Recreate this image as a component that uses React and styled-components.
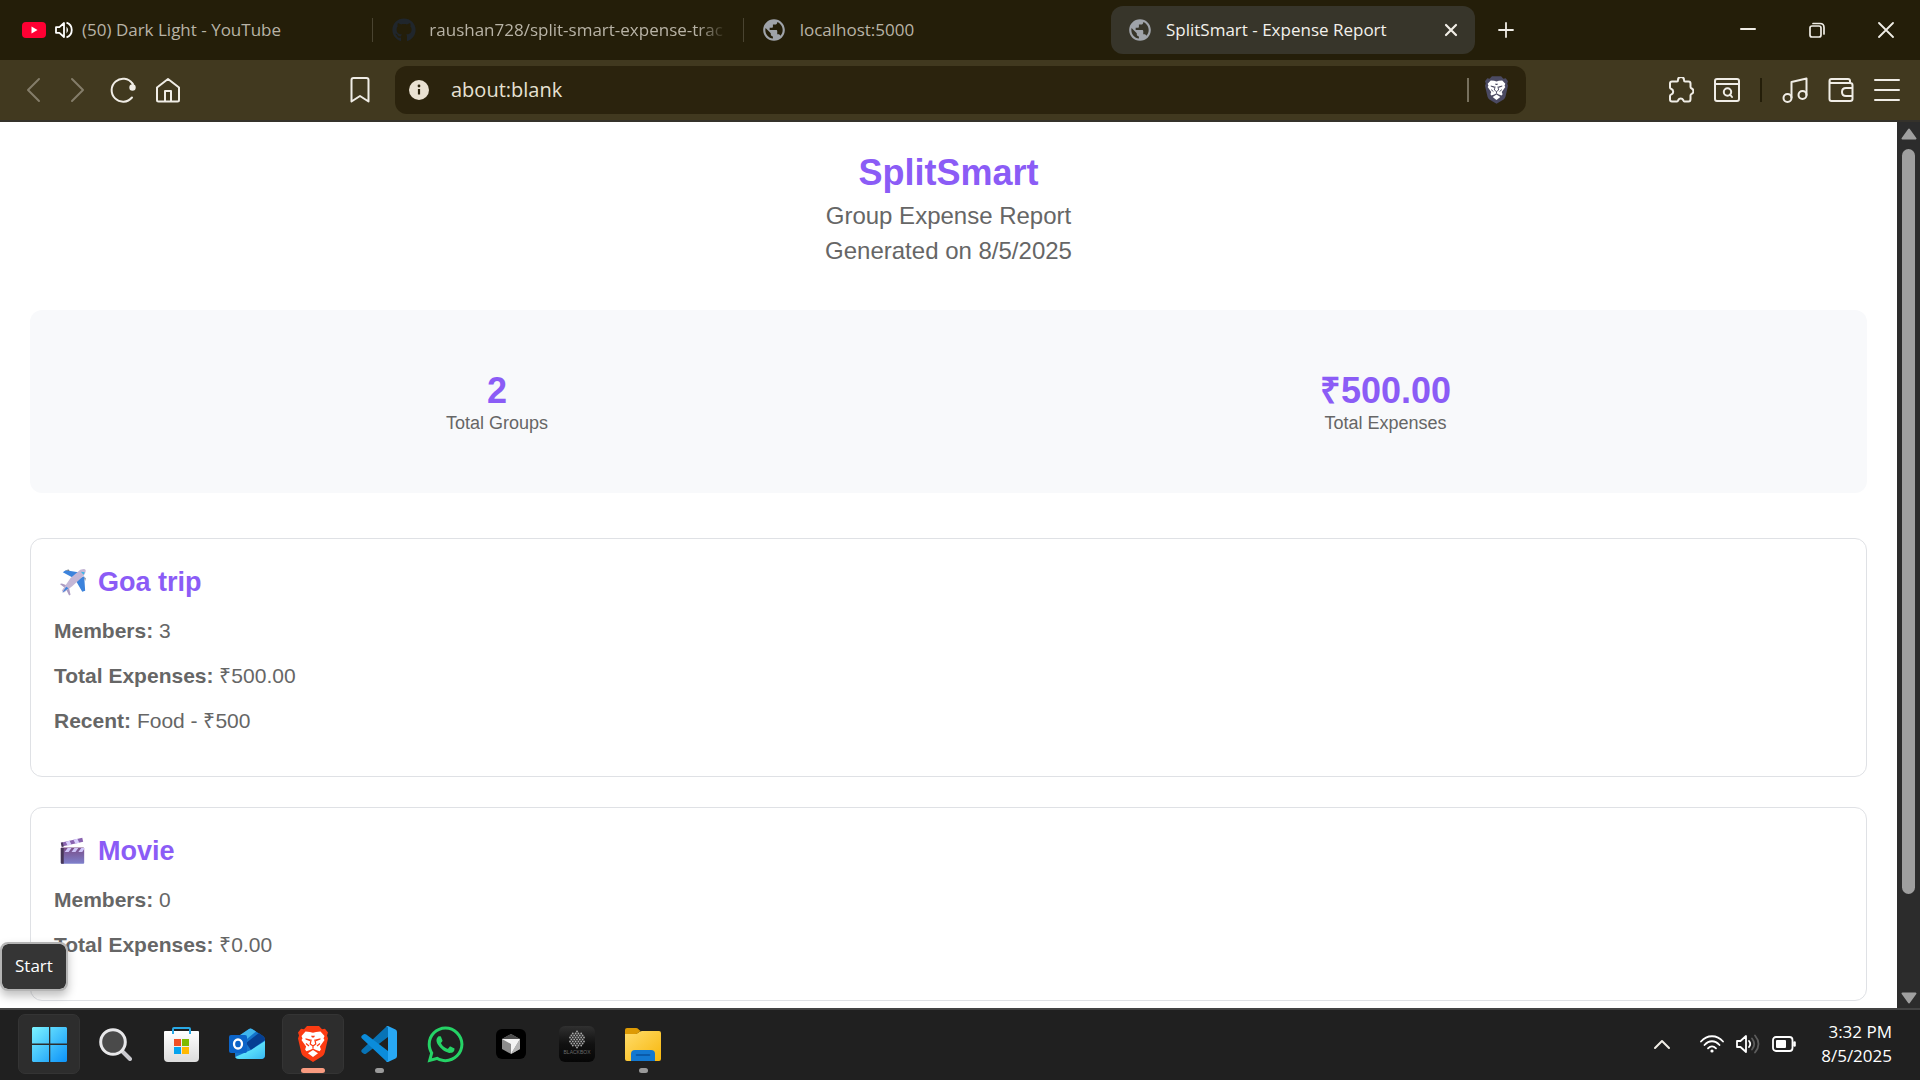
import React from "react";
import styled, { createGlobalStyle, css } from "styled-components";
import { MdPublic } from "react-icons/md";
import { FaGithub, FaWhatsapp } from "react-icons/fa";

const uiFont = '"Open Sans", "Noto Sans", sans-serif';
const pageFont = '"Liberation Sans", Arial, sans-serif';

const GlobalStyle = createGlobalStyle`
  *, *::before, *::after { box-sizing: border-box; }
  body { margin: 0; background: #202020; }
  button, input { font: inherit; color: inherit; }
  svg { display: block; flex: none; }
`;

const Desktop = styled.div`
  display: flex;
  flex-direction: column;
  height: 100vh;
  overflow: hidden;
  position: relative;
  font-family: ${uiFont};
`;

/* ---------- tab strip ---------- */

const TabStrip = styled.header`
  display: flex;
  align-items: center;
  height: 60px;
  flex: none;
  background: #241e09;
  color: #b8b3a6;
  font-size: 17px;
  line-height: 24px;
`;

const Tabs = styled.nav`
  display: flex;
  align-items: center;
  flex: 0 1 1475px;
  min-width: 0;
`;

const Tab = styled.button`
  display: flex;
  align-items: center;
  gap: ${(p) => p.$gap || 13}px;
  flex: 1 1 0;
  min-width: 0;
  height: 48px;
  padding: 0 16px 0 ${(p) => p.$pad || 16}px;
  border: 0;
  border-radius: 12px;
  background: transparent;
  text-align: left;
  position: relative;
  ${(p) =>
    p.$divided &&
    css`
      &::after {
        content: "";
        position: absolute;
        right: -1px;
        top: 12px;
        height: 24px;
        width: 1px;
        background: #4a4431;
      }
    `}
`;

const ActiveTab = styled.div`
  display: flex;
  align-items: center;
  flex: 0 1 364px;
  height: 48px;
  padding-right: 12px;
  border-radius: 12px;
  background: #37352a;
  color: #f3f1ec;
`;

const TabTitle = styled.span`
  flex: 1;
  min-width: 0;
  overflow: hidden;
  white-space: nowrap;
  ${(p) => p.$fade && "mask-image: linear-gradient(to right, #000 90%, transparent);"}
`;

const IconButton = styled.button`
  display: flex;
  align-items: center;
  justify-content: center;
  flex: none;
  width: ${(p) => p.$w || 24}px;
  height: 28px;
  padding: 0;
  border: 0;
  background: transparent;
  color: ${(p) => (p.$dim ? "#847d69" : "#f0ede6")};
`;

const WindowControls = styled.div`
  display: flex;
  margin-left: auto;
`;

/* ---------- toolbar ---------- */

const Toolbar = styled.div`
  display: flex;
  align-items: center;
  justify-content: space-between;
  height: 62px;
  flex: none;
  padding: 0 16px;
  border-bottom: 2px solid #35322b;
  background: #41391f;
  color: #f0ede6;
`;

const NavGroup = styled.div`
  display: flex;
  align-items: center;
  width: 379px;
  flex: none;
  & > :last-child { margin-left: auto; margin-right: 23px; }
`;

const AddressBar = styled.label`
  display: flex;
  align-items: center;
  flex: 1;
  min-width: 0;
  height: 48px;
  padding: 0 18px 0 14px;
  border-radius: 12px;
  background: #2b230d;
`;

const AddressInput = styled.input`
  flex: 1;
  min-width: 0;
  margin-left: 22px;
  padding: 0;
  border: 0;
  outline: 0;
  background: transparent;
  font-size: 20px;
  line-height: 28px;
  color: #e6e1d3;
`;

const Rule = styled.span`
  width: 2px;
  height: 24px;
  margin: ${(p) => p.$margin || "0"};
  background: ${(p) => p.$color};
`;

const ToolGroup = styled.div`
  display: flex;
  align-items: center;
  justify-content: space-between;
  width: 232px;
  margin-left: 142px;
  margin-right: 4px;
  flex: none;
`;

/* ---------- report page ---------- */

const Viewport = styled.div`
  display: flex;
  flex: 1;
  min-height: 0;
  background: #fff;
`;

const Report = styled.main`
  flex: 1;
  min-width: 0;
  overflow: hidden;
  padding: 30px;
  color: #666;
  font-family: ${pageFont};
`;

const ReportHeader = styled.section`
  margin-bottom: 42px;
  text-align: center;
  font-size: 24px;
  line-height: 35px;
`;

const Brand = styled.h1`
  margin: 0 0 4px;
  color: #8b5cf6;
  font-size: 36px;
  line-height: 42px;
`;

const HeaderLine = styled.div``;

const Summary = styled.section`
  display: flex;
  justify-content: space-around;
  margin-bottom: 45px;
  padding: 60px 30px 59px;
  border-radius: 12px;
  background: #f8f9fb;
`;

const Stat = styled.div`
  text-align: center;
  font-size: 18px;
  line-height: 22px;
`;

const StatValue = styled.div`
  color: #8b5cf6;
  font-size: 36px;
  font-weight: 700;
  line-height: 42px;
`;

const Card = styled.article`
  margin-bottom: 30px;
  padding: 22px 22px 27px 23px;
  border: 1px solid #dfe1e5;
  border-radius: 12px;
  font-size: 21px;
  line-height: 33px;
`;

const CardTitle = styled.h2`
  display: flex;
  align-items: center;
  gap: 7px;
  margin: 0 0 11px;
  color: #8b5cf6;
  font-size: 27px;
  line-height: 42px;
`;

const Detail = styled.p`
  margin: 0 0 12px;
`;

const ScrollTrack = styled.div`
  display: flex;
  flex-direction: column;
  align-items: center;
  width: 23px;
  flex: none;
  padding: 6px 0 4px;
  background: #2c2c2c;
`;

const ScrollThumb = styled.div`
  width: 13px;
  height: 85%;
  margin: 9px 0 auto;
  border-radius: 7px;
  background: #9f9f9f;
`;

/* ---------- taskbar ---------- */

const Taskbar = styled.footer`
  display: flex;
  align-items: center;
  justify-content: space-between;
  height: 72px;
  flex: none;
  padding: 0 28px 2px 18px;
  border-top: 2px solid #434343;
  background: #202020;
  color: #fff;
`;

const Apps = styled.div`
  display: flex;
  gap: 4px;
`;

const AppButton = styled.button`
  display: flex;
  align-items: center;
  justify-content: center;
  position: relative;
  width: 62px;
  height: 60px;
  padding: 0;
  border: 1px solid ${(p) => (p.$lit ? "#343434" : "transparent")};
  border-radius: 7px;
  background: ${(p) => (p.$lit ? "#2d2d2d" : "transparent")};
  ${(p) =>
    p.$mark &&
    css`
      &::after {
        content: "";
        position: absolute;
        bottom: 0;
        width: ${p.$mark === "active" ? 24 : 9}px;
        height: 5px;
        border-radius: 3px;
        background: ${p.$mark === "active" ? "#f99b80" : "#9a9a9a"};
      }
    `}
`;

const Tray = styled.div`
  display: flex;
  align-items: center;
  gap: 12px;
`;

const Clock = styled.time`
  margin-left: 13px;
  text-align: right;
  font-size: 17px;
  line-height: 24px;
`;

const Tooltip = styled.div`
  position: absolute;
  left: 0;
  bottom: 89px;
  padding: 10px 13px 11px;
  border: 2px solid #b4b4b4;
  border-radius: 8px;
  background: #353535;
  background-clip: padding-box;
  box-shadow: 0 5px 10px rgba(0, 0, 0, 0.25);
  color: #fff;
  font-size: 17px;
  line-height: 24px;
`;

/* ---------- drawings ---------- */

function Line({ w = 26, h = 26, sw = 2, children }) {
  return (
    <svg width={w} height={h} viewBox={`0 0 ${w} ${h}`} fill="none" stroke="currentColor"
      strokeWidth={sw} strokeLinecap="round" strokeLinejoin="round" aria-hidden="true">
      {children}
    </svg>
  );
}

const YouTubeMark = () => (
  <svg width="24" height="16" viewBox="0 0 24 16">
    <rect width="24" height="16" rx="4" fill="#ff0033" />
    <path d="M9.5 4.6v6.8L15.5 8z" fill="#fff" />
  </svg>
);

const TabSound = () => (
  <svg width="18" height="18" viewBox="0 0 18 18" fill="none" stroke="#fff" strokeWidth="1.8">
    <path d="M1 6.200h3.400L9 2v14l-4.600-4.200H1z" strokeLinejoin="round" />
    <path d="M11.500 5.500q3 3.500 0 7z" fill="#fff" stroke="none" />
    <path d="M11.500 1.600c7 2.400 7 12.400 0 14.800" />
  </svg>
);

const Lion = ({ w, h, color }) => (
  <svg width={w} height={h} viewBox="0 0 30 36">
    <path d="M9 0h12l3 3.200 3-.4 3 3.700-1 3 1 3-3.300 14.300q-.6 2.200-2.400 3.500L15 36l-9.300-5.700q-1.800-1.300-2.400-3.500L0 12.500l1-3-1-3 3-3.700 3 .4z" fill={color} />
    <path d="M15 6.800l3-.8 4.500-.5 4 4.500-1 2.500 1 1.500-4.600 6.500 1 3-1.300 1.700L18 24l-3-1.600L12 24l-3.600 1.200L7.100 23.500l1-3L3.500 14l1-1.500-1-2.500 4-4.500 4.500.5z" fill="#fff" />
    <path d="M15 24l5 3.200-5 3.800-5-3.800z" fill="#fff" />
    <path d="M7.500 12.200l5 1.300.2 2-5.200-2zM22.500 12.200l-5 1.300-.2 2 5.200-2zM13 9.800h4l-1 1.800h-2z" fill={color} />
    <path d="M13.200 13.500l-1 4.500 2.800 2 2.800-2-1-4.500M15 20v2.500M8 17.500l3 2.500M22 17.500L19 20" fill="none" stroke={color} strokeWidth="1.200" />
  </svg>
);

const WindowsMark = () => (
  <svg width="35" height="35" viewBox="0 0 35 35">
    <defs>
      <linearGradient id="win" x1="0" y1="0" x2="35" y2="35" gradientUnits="userSpaceOnUse">
        <stop stopColor="#7cf3ff" /><stop offset="1" stopColor="#0c92f8" />
      </linearGradient>
    </defs>
    <path fill="url(#win)" d="M1 0h16v16.500H0V1zM18.300 0H34l1 1v15.500H18.300zM0 18h17v17H1l-1-1zM18.300 18H35v16l-1 1H18.300z" />
  </svg>
);

const SearchMark = () => (
  <svg width="34" height="34" viewBox="0 0 34 34">
    <path d="M24 24l8 8" stroke="#c9c9ce" strokeWidth="4" strokeLinecap="round" />
    <circle cx="15" cy="15" r="12.300" fill="#4a4a4a" stroke="#e8e8ea" strokeWidth="3" />
  </svg>
);

const StoreMark = () => (
  <svg width="35" height="35" viewBox="0 0 35 35">
    <defs>
      <linearGradient id="bag" x1="0" y1="0" x2="0" y2="1"><stop stopColor="#fff" /><stop offset="1" stopColor="#dcdcdc" /></linearGradient>
    </defs>
    <path d="M0 5q0-1 1-1h33q1 0 1 1v26q0 4-4 4H4q-4 0-4-4z" fill="url(#bag)" />
    <path d="M9 7V2q0-1 1-1h15q1 0 1 1v5" fill="none" stroke="#29a9e6" strokeWidth="2" />
    <path fill="#f04f25" d="M10 12h7v7h-7z" /><path fill="#7fba00" d="M18 12h7v7h-7z" />
    <path fill="#05a3ee" d="M10 20h7v7h-7z" /><path fill="#ffb902" d="M18 20h7v7h-7z" />
  </svg>
);

const OutlookMark = () => (
  <svg width="36" height="32" viewBox="0 0 36 32">
    <defs>
      <linearGradient id="env" x1="0" y1="0" x2="1" y2="1"><stop stopColor="#1f8bd8" /><stop offset=".5" stopColor="#5be0fb" /><stop offset="1" stopColor="#38b8f2" /></linearGradient>
    </defs>
    <path d="M6 11L20 1q1.500-1 3 0l11 7q2 1.500 2 4v15q0 4-4 4H10q-4 0-4-4z" fill="#1473cb" />
    <path d="M8 9L20 1q1.500-1 3 0l4 2.500L13 15z" fill="#3fb5ec" />
    <path d="M17 15L30 5l5 4q1 1 1 3L22 22z" fill="#063f92" />
    <path d="M36 13v14q0 4-4 4H10q-3 0-4-2l16-7z" fill="url(#env)" />
    <rect y="7" width="18" height="18" rx="2" fill="#0c64c8" />
    <ellipse cx="9" cy="16" rx="4" ry="4.500" fill="none" stroke="#fff" strokeWidth="2.300" />
  </svg>
);

const CodeMark = () => (
  <svg width="36" height="36" viewBox="0 0 36 36">
    <path d="M1 23.500q-1.500 1.500 0 3l1.800 1.300q1.200.7 2.500-.2L27 11V0q-1 0-2 1z" fill="#0873b6" />
    <path d="M1 12.500q-1.500-1.500 0-3l1.800-1.300q1.200-.7 2.500.2L27 25v11q-1 0-2-1z" fill="#0b8cdb" />
    <path d="M27 0l7.500 3.500Q36 4.200 36 6v24q0 1.800-1.500 2.500L27 36q-1.600.2-2-1 2 .8 2-1V2q0-1.600-2-1 .6-1 2-1z" fill="#28a8f5" />
  </svg>
);

const CubeMark = () => (
  <svg width="30" height="30" viewBox="0 0 30 30">
    <rect width="30" height="30" rx="6" fill="#000" />
    <path d="M15 5l9 5v10l-9 5-9-5V10z" fill="#8b8b8b" />
    <path d="M15 5l9 5H6z" fill="#4c4c4c" />
    <path d="M6 10h18l-9 15v-10z" fill="#f4f4f4" />
    <path d="M24 10v10l-9 5z" fill="#b5b5b5" />
  </svg>
);

const dotRows = [1, 4, 5, 6, 5, 6, 5, 4, 1];
const BlackboxMark = () => (
  <svg width="36" height="36" viewBox="0 0 36 36">
    <defs>
      <linearGradient id="bb" x1="0" y1="0" x2="0" y2="1"><stop stopColor="#303030" /><stop offset=".5" stopColor="#111" /><stop offset="1" stopColor="#060606" /></linearGradient>
    </defs>
    <rect width="36" height="36" rx="6" fill="url(#bb)" />
    {dotRows.map((n, r) =>
      Array.from({ length: n }, (_, i) => (
        <circle key={`${r}-${i}`} cx={18 + (i - (n - 1) / 2) * 2.8} cy={5.500 + r * 2} r=".9" fill="#a8a8a8" />
      ))
    )}
    <text x="18" y="28" textAnchor="middle" fontSize="5" fontFamily="Liberation Sans" fill="#6a6a6a">BLACKBOX</text>
  </svg>
);

const FolderMark = () => (
  <svg width="36" height="33" viewBox="0 0 36 33">
    <defs>
      <linearGradient id="fold" x1="0" y1="0" x2="1" y2="1"><stop stopColor="#ffdc6b" /><stop offset="1" stopColor="#f8b70c" /></linearGradient>
    </defs>
    <path d="M0 6h10q2 0 3.500-1.400Q15 3 17 3h17q2 0 2 2v26q0 2-2 2H2q-2 0-2-2z" fill="url(#fold)" />
    <path d="M0 2q0-2 2-2h9q1.500 0 2.500 1.200L15.500 3 13 5q-1 1-2.500 1H0z" fill="#dd9a04" />
    <path d="M6 33v-7q0-4 4-4h16q4 0 4 4v7z" fill="#1378d0" />
    <path d="M11.500 27h13" stroke="#09509c" strokeWidth="1.600" strokeLinecap="round" />
  </svg>
);

const PlaneEmoji = () => (
  <svg width="37" height="28" viewBox="0 0 38 28">
    <path d="M9 4l3-2 13 2-5 6zM31 8l1 15-3 1-7-12z" fill="#3c83dc" />
    <path d="M12 2l3-.8 1 1.400zM31 9l1.500 1-.5 3z" fill="#5d6674" />
    <path d="M6 16l2-.5 7 2.500 2 9-1.500.8-3.500-7z" fill="#ac9bc2" />
    <path d="M8 23l9-13L27 1.500q5-2 5.500.5.400 2-2 5.500L19 18 10 25z" fill="#c5b7d6" />
    <path d="M8.500 25l4-6 2.500 1.500z" fill="#3c83dc" />
    <path d="M27.500 3.500l3 3 1-2.500z" fill="#38b8ea" />
  </svg>
);

const ClapperEmoji = () => (
  <svg width="37" height="28" viewBox="0 0 38 28">
    <defs>
      <linearGradient id="clap" x1="0" y1="0" x2="0" y2="1"><stop stopColor="#7a4d86" /><stop offset="1" stopColor="#7e80cc" /></linearGradient>
    </defs>
    <path d="M7 5.500L29 .5 30 4.500 8 9.500z" fill="#8a63b0" />
    <path d="M12 4.500l4-1 2 4-4 1zM20 2.500l4-1 2 4-4 1z" fill="#d8cdfd" />
    <path d="M7 5.500l2-.5L10 9.500l-2 .5z" fill="#4b3a5c" />
    <rect x="7" y="10.500" width="24" height="16.500" rx="1" fill="url(#clap)" />
    <path d="M7 11h3v16H8q-1 0-1-1z" fill="#463657" />
    <path d="M14 11h4l-3 4h-4zM21 11h4l-3 4h-4zM28 11h3v1l-2 3h-4z" fill="#cfc4fa" />
  </svg>
);

/* ---------- data ---------- */

const groups = [
  { name: "Goa trip", Icon: PlaneEmoji, details: [["Members:", "3"], ["Total Expenses:", "₹500.00"], ["Recent:", "Food - ₹500"]] },
  { name: "Movie", Icon: ClapperEmoji, details: [["Members:", "0"], ["Total Expenses:", "₹0.00"]] },
];

const apps = [
  { name: "Start", icon: <WindowsMark />, lit: true },
  { name: "Search", icon: <SearchMark /> },
  { name: "Microsoft Store", icon: <StoreMark /> },
  { name: "Outlook", icon: <OutlookMark /> },
  { name: "Brave", icon: <Lion w={30} h={36} color="#fb3b12" />, lit: true, mark: "active" },
  { name: "Visual Studio Code", icon: <CodeMark />, mark: "open" },
  { name: "WhatsApp", icon: <FaWhatsapp size={41} color="#25d366" /> },
  { name: "Cursor", icon: <CubeMark /> },
  { name: "Blackbox", icon: <BlackboxMark /> },
  { name: "File Explorer", icon: <FolderMark />, mark: "open" },
];

export default function App() {
  return (
    <Desktop>
      <GlobalStyle />
      <TabStrip>
        <Tabs aria-label="Open tabs">
          <Tab $divided $gap={9} $pad={22}>
            <YouTubeMark />
            <TabSound />
            <TabTitle>(50) Dark Light - YouTube</TabTitle>
          </Tab>
          <Tab $divided $pad={20}>
            <FaGithub size={24} color="#20262c" />
            <TabTitle $fade>raushan728/split-smart-expense-trac</TabTitle>
          </Tab>
          <Tab $pad={18}>
            <MdPublic size={26} color="#9fa3a9" />
            <TabTitle>localhost:5000</TabTitle>
          </Tab>
          <ActiveTab>
            <Tab as="div">
              <MdPublic size={26} color="#9fa3a9" />
              <TabTitle>SplitSmart - Expense Report</TabTitle>
            </Tab>
            <IconButton aria-label="Close tab">
              <Line w={14} h={14} sw={2.2}><path d="M2 2l10 10M12 2L2 12" /></Line>
            </IconButton>
          </ActiveTab>
        </Tabs>
        <IconButton $w={62} aria-label="New tab">
          <Line w={16} h={16} sw={1.8}><path d="M8 1v14M1 8h14" /></Line>
        </IconButton>
        <WindowControls>
          <IconButton $w={69} aria-label="Minimize">
            <Line w={16} h={16}><path d="M1 7h14" /></Line>
          </IconButton>
          <IconButton $w={69} aria-label="Restore">
            <Line w={16} h={16} sw={1.7}>
              <rect x="1" y="4" width="11" height="11" rx="2" />
              <path d="M4 1.500h7q4 0 4 4v6.500" />
            </Line>
          </IconButton>
          <IconButton $w={69} aria-label="Close">
            <Line w={16} h={16} sw={1.8}><path d="M1 1l14 14M15 1L1 15" /></Line>
          </IconButton>
        </WindowControls>
      </TabStrip>

      <Toolbar>
        <NavGroup>
          <IconButton $w={34} $dim aria-label="Back">
            <Line><path d="M19 2L8 13l11 11" /></Line>
          </IconButton>
          <IconButton $w={54} $dim aria-label="Forward">
            <Line><path d="M8 2l11 11L8 24" /></Line>
          </IconButton>
          <IconButton $w={38} aria-label="Reload">
            <Line>
              <path d="M22 20.500A11.500 11.500 0 1 1 22.500 6.500" />
              <circle cx="22.500" cy="10.500" r="3.200" fill="currentColor" stroke="none" />
              <path d="M22.500 6.500l1 3" />
            </Line>
          </IconButton>
          <IconButton $w={52} aria-label="Home">
            <Line><path d="M2 10.500L13 2l11 8.500V23q0 1.500-1.500 1.500h-19Q2 24.500 2 23zM10 24V14h6v10" /></Line>
          </IconButton>
          <IconButton $w={24} aria-label="Bookmark">
            <Line w={20} h={26}><path d="M1.500 3q0-2 2-2h13q2 0 2 2v21.500L10 19l-8.500 5.500z" /></Line>
          </IconButton>
        </NavGroup>
        <AddressBar>
          <svg width="20" height="20" viewBox="0 0 20 20">
            <circle cx="10" cy="10" r="10" fill="#e9e1d2" />
            <path d="M10 9v5.500" stroke="#2b230d" strokeWidth="2.200" />
            <circle cx="10" cy="6" r="1.400" fill="#2b230d" />
          </svg>
          <AddressInput aria-label="Address" defaultValue="about:blank" />
          <Rule $color="#77705d" $margin="0 16px" />
          <Lion w={23} h={28} color="#4b4a62" />
        </AddressBar>
        <ToolGroup>
          <IconButton $w={26} aria-label="Extensions">
            <Line>
              <path d="M2 6.500q0-2 2-2h5c1 0 1-.8 1-1.500a3 3 0 0 1 6 0c0 .7 0 1.500 1 1.500h3.500q2 0 2 2V10c0 1 .6 1.300 1.200 1.500a3 3 0 0 1 0 5.400c-.6.300-1.200.600-1.200 1.600V22q0 2.500-2 2.500h-4c-1 0-1-.8-1.300-1.500a2.700 2.700 0 0 0-4.900 0c-.3.700-.3 1.500-1.300 1.500H4q-2 0-2-2v-3.500c0-1 .8-1.300 1.500-1.600a3 3 0 0 0 0-5.400C2.800 11.700 2 11.400 2 10.400z" />
            </Line>
          </IconButton>
          <IconButton $w={26} aria-label="Find in page">
            <Line>
              <rect x="1" y="2" width="24" height="22" rx="2" />
              <path d="M1.500 7h23M16 17.500l2 2.500" />
              <circle cx="13.500" cy="15" r="3.700" />
            </Line>
          </IconButton>
          <Rule $color="#241e09" />
          <IconButton $w={26} aria-label="Playlist">
            <Line>
              <circle cx="5.500" cy="21" r="4" />
              <circle cx="20.500" cy="18" r="4" />
              <path d="M9.500 20.500V5l15-3.500V18" />
            </Line>
          </IconButton>
          <IconButton $w={26} aria-label="Wallet">
            <Line>
              <path d="M22 6V4q0-2-2-2H3.500Q1.500 2 1.500 4v18q0 2 2 2H22q2.500 0 2.500-2V8q0-2-2.500-2H3.500q-2 0-2-2M24.500 11H18q-4 0-4 4t4 4h6.500" />
            </Line>
          </IconButton>
          <IconButton $w={26} aria-label="Menu">
            <Line><path d="M1 3h24M1 13h24M1 23h24" /></Line>
          </IconButton>
        </ToolGroup>
      </Toolbar>

      <Viewport>
        <Report>
          <ReportHeader>
            <Brand>SplitSmart</Brand>
            <HeaderLine>Group Expense Report</HeaderLine>
            <HeaderLine>Generated on 8/5/2025</HeaderLine>
          </ReportHeader>
          <Summary>
            <Stat><StatValue>2</StatValue>Total Groups</Stat>
            <Stat><StatValue>₹500.00</StatValue>Total Expenses</Stat>
          </Summary>
          {groups.map(({ name, Icon, details }) => (
            <Card key={name}>
              <CardTitle><Icon />{name}</CardTitle>
              {details.map(([label, value]) => (
                <Detail key={label}><strong>{label}</strong> {value}</Detail>
              ))}
            </Card>
          ))}
        </Report>
        <ScrollTrack>
          <svg width="16" height="12" viewBox="0 0 16 12"><path d="M8 1.500L14.500 10.500h-13z" fill="#9f9f9f" stroke="#9f9f9f" strokeWidth="2" strokeLinejoin="round" /></svg>
          <ScrollThumb />
          <svg width="16" height="12" viewBox="0 0 16 12"><path d="M8 10.500L14.500 1.500h-13z" fill="#9f9f9f" stroke="#9f9f9f" strokeWidth="2" strokeLinejoin="round" /></svg>
        </ScrollTrack>
      </Viewport>

      <Taskbar>
        <Apps>
          {apps.map((a) => (
            <AppButton key={a.name} aria-label={a.name} $lit={a.lit} $mark={a.mark}>{a.icon}</AppButton>
          ))}
        </Apps>
        <Tray>
          <IconButton $w={24} aria-label="Show hidden icons">
            <Line w={18} h={12}><path d="M2 10l7-7 7 7" /></Line>
          </IconButton>
          <Rule $color="transparent" />
          <Line w={24} h={20} sw={1.8}>
            <path d="M1 7.500C7 .500 17 .500 23 7.500M4.500 11c4.500-5 10.500-5 15 0M8 14.300c2.500-2.600 5.500-2.600 8 0" />
            <circle cx="12" cy="17" r="1.600" fill="currentColor" stroke="none" />
          </Line>
          <Line w={24} h={20} sw={1.8}>
            <path d="M1 7h3.500L10 2v16l-5.500-5H1z" />
            <path d="M13 7q2.500 3 0 6" />
            <path d="M16 4.500q4.500 5.500 0 11M19 1.500q7 8.500 0 17" stroke="#5c5c5c" />
          </Line>
          <Line w={24} h={16} sw={1.8}>
            <rect x="1" y="1" width="19.500" height="14" rx="3" />
            <rect x="4" y="4" width="10" height="8" rx="1" fill="currentColor" stroke="none" />
            <path d="M22.500 6.500v3" strokeWidth="2.600" />
          </Line>
          <Clock>3:32 PM<br />8/5/2025</Clock>
        </Tray>
      </Taskbar>
      <Tooltip role="tooltip">Start</Tooltip>
    </Desktop>
  );
}
